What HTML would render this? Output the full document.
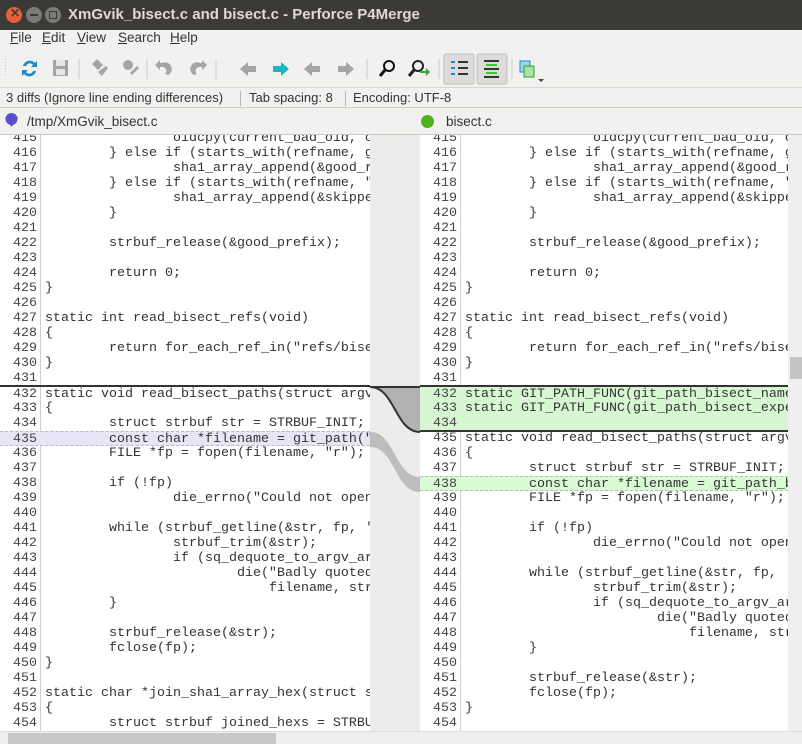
<!DOCTYPE html>
<html><head><meta charset="utf-8"><style>
*{margin:0;padding:0;box-sizing:border-box}
body{width:802px;height:744px;overflow:hidden;background:#f2f1f0;font-family:"Liberation Sans",sans-serif;position:relative}
.title{position:absolute;left:0;top:0;width:802px;height:30px;background:#3b3a36;color:#dfdbd2;font-weight:bold;font-size:15px}
.title .t{position:absolute;left:68px;top:6px}
.btn{position:absolute;top:7px;width:16px;height:16px;border-radius:50%}
.menu{position:absolute;top:30px;left:0;width:802px;height:18px;font-size:13.5px;color:#333}
.menu span{position:absolute;top:0}
.tb{position:absolute;top:48px;left:0;width:802px;height:40px;border-bottom:1px solid #d8d6d3}
.status{position:absolute;top:88px;left:0;width:802px;height:20px;font-size:13px;color:#333;border-bottom:1px solid #cfcdca}
.status span{position:absolute;top:2px}
.sep{position:absolute;top:3px;width:1px;height:15px;background:#b5b3b0}
.hdr{position:absolute;top:109px;height:26px;font-size:13.5px;color:#333;width:802px;border-bottom:1px solid #c9c7c4}
.pane{position:absolute;top:135px;height:596px;background:#fff;overflow:hidden}
.rows{position:absolute;left:0;top:-4px;width:100%}
.r{height:15px;line-height:15px;font-family:"Liberation Mono",monospace;font-size:13.33px;color:#333;white-space:pre;position:relative}
.n{position:absolute;left:0;text-align:right;color:#444}
.c{position:absolute;top:0}
.gut{position:absolute;top:0;height:100%;width:1px;background:#cfcfcf}
</style></head><body>
<div class="title">
<div class="btn" style="left:6px;background:#e8603a;"></div><div style="position:absolute;left:10px;top:6px;color:#3b3a36;font-size:12px">✕</div>
<div class="btn" style="left:26px;background:#7b7a75"></div><div style="position:absolute;left:30px;top:14px;width:8px;height:2px;background:#3b3a36"></div>
<div class="btn" style="left:45px;background:#7b7a75"></div><div style="position:absolute;left:49px;top:11px;width:8px;height:8px;border:1.5px solid #3b3a36"></div>
<div class="t">XmGvik_bisect.c and bisect.c - Perforce P4Merge</div></div>
<div class="menu"><span style="left:10px"><u>F</u>ile</span><span style="left:42px"><u>E</u>dit</span><span style="left:77px"><u>V</u>iew</span><span style="left:118px"><u>S</u>earch</span><span style="left:170px"><u>H</u>elp</span></div>
<div class="tb">
<svg width="802" height="40" style="position:absolute;left:0;top:1px">
<g fill="#bbb"><rect x="5" y="10" width="1" height="1"/><rect x="5" y="13" width="1" height="1"/><rect x="5" y="16" width="1" height="1"/><rect x="5" y="19" width="1" height="1"/><rect x="5" y="22" width="1" height="1"/><rect x="5" y="25" width="1" height="1"/></g>
<path d="M23 17a7 7 0 0 1 12-3l2-2v6h-6l2-2a4 4 0 0 0-7 1z M36 22a7 7 0 0 1-12 3l-2 2v-6h6l-2 2a4 4 0 0 0 7-1z" fill="#1a8fc7"/>
<rect x="53" y="11" width="15" height="16" fill="#a5a4a2"/><rect x="56" y="11" width="9" height="6" fill="#e6e5e3"/><rect x="56" y="20" width="9" height="6" fill="#e6e5e3"/>
<line x1="79" y1="10" x2="79" y2="30" stroke="#ccc"/>
<path d="M92 15l5-5 6 6-5 5z M98 23l8-6 2 2-6 8z" fill="#a5a4a2"/>
<circle cx="128" cy="16" r="5" fill="#a5a4a2"/><path d="M130 24l7-7 2 2-7 7z" fill="#a5a4a2"/>
<line x1="147" y1="10" x2="147" y2="30" stroke="#ccc"/>
<path d="M168 26a6 6 0 0 0-6-12h-2v-3l-5 5 5 5v-3h2a4 4 0 0 1 3 7z" fill="#a5a4a2"/>
<path d="M194 26a6 6 0 0 1 6-12h2v-3l5 5-5 5v-3h-2a4 4 0 0 0-3 7z" fill="#a5a4a2"/>
<line x1="216" y1="10" x2="216" y2="30" stroke="#ccc"/>
<path d="M240 20l8-7v4h8v6h-8v4z" fill="#a5a4a2"/>
<path d="M289 20l-8-7v4h-8v6h8v4z" fill="#1ab6c4"/>
<path d="M304 20l8-7v4h8v6h-8v4z" fill="#a5a4a2"/>
<path d="M354 20l-8-7v4h-8v6h8v4z" fill="#a5a4a2"/>
<line x1="367" y1="10" x2="367" y2="30" stroke="#ccc"/>
<circle cx="389" cy="17" r="5" fill="none" stroke="#111" stroke-width="2"/><path d="M385 21l-5 6" stroke="#111" stroke-width="3"/>
<circle cx="418" cy="17" r="5" fill="none" stroke="#222" stroke-width="2"/><path d="M414 21l-5 6" stroke="#222" stroke-width="3"/><path d="M420 22l6 0l0-3l4 4l-4 4l0-3l-6 0z" fill="#3a3"/>
<line x1="439" y1="10" x2="439" y2="30" stroke="#ccc"/>
<rect x="444" y="5" width="30" height="30" rx="2" fill="#dddcda" stroke="#bfbebc"/>
<rect x="477" y="5" width="30" height="30" rx="2" fill="#dddcda" stroke="#bfbebc"/>
<g fill="#1a8fc7"><rect x="451" y="12" width="4" height="2"/><rect x="451" y="18" width="4" height="2"/><rect x="451" y="24" width="4" height="2"/></g>
<g fill="#333"><rect x="458" y="12" width="10" height="2"/><rect x="458" y="18" width="10" height="2"/><rect x="458" y="24" width="10" height="2"/></g>
<g fill="#333"><rect x="484" y="11" width="15" height="2"/><rect x="484" y="19" width="15" height="2"/><rect x="484" y="27" width="15" height="2"/></g>
<g fill="#3c3"><rect x="486" y="15" width="11" height="2"/><rect x="486" y="23" width="11" height="2"/></g>
<line x1="512" y1="10" x2="512" y2="30" stroke="#ccc"/>
<rect x="520" y="12" width="10" height="11" fill="#9fd3f0" stroke="#1a8fc7"/><rect x="524" y="17" width="10" height="11" fill="#a8e0a8" stroke="#2a2"/>
<path d="M538 30h6l-3 3z" fill="#444"/>
</svg></div>
<div class="status"><span style="left:6px">3 diffs (Ignore line ending differences)</span><div class="sep" style="left:240px"></div><span style="left:249px">Tab spacing: 8</span><div class="sep" style="left:345px"></div><span style="left:353px">Encoding: UTF-8</span></div>
<div class="hdr"><svg width="20" height="20" style="position:absolute;left:3px;top:4px"><path d="M2 4h13l-6.5 10z" fill="#5a4fcf"/><circle cx="8.5" cy="6" r="6" fill="#5a4fcf"/></svg><span style="position:absolute;left:27px;top:5px">/tmp/XmGvik_bisect.c</span>
<div style="position:absolute;left:421px;top:6px;width:13px;height:13px;border-radius:50%;background:#52b11a"></div><span style="position:absolute;left:446px;top:5px">bisect.c</span></div>

<div style="position:absolute;left:370px;top:135px;width:50px;height:596px;background:#edecea"></div>
<svg width="50" height="120" style="position:absolute;left:370px;top:382px">
<path d="M0 5 C25 5 25 50 50 50 L50 5 Z" fill="#b2b2b2"/>
<path d="M0 5 C25 5 25 50 50 50" fill="none" stroke="#333" stroke-width="2"/>
<path d="M0 5H50" stroke="#333" stroke-width="2"/>
<path d="M0 50 C25 50 25 95 50 95 L50 110 C25 110 25 65 0 65 Z" fill="#bdbdbd"/>
</svg>

<div class="pane" style="left:0;width:370px"><div class="gut" style="left:40px"></div><div class="rows" id="L"></div></div>
<div class="pane" style="left:420px;width:368px"><div class="gut" style="left:40px"></div><div class="rows" id="R"></div></div>

<div style="position:absolute;left:788px;top:135px;width:14px;height:596px;background:#efefef"><div style="position:absolute;left:2px;top:222px;width:12px;height:22px;background:#c4c4c4"></div></div>
<div style="position:absolute;left:0;top:731px;width:802px;height:13px;background:#efefef;border-top:1px solid #ddd"><div style="position:absolute;left:8px;top:1px;width:268px;height:11px;background:#c8c8c8"></div></div>
<script>
var L=["                oidcpy(current_bad_oid, oid);","        } else if (starts_with(refname, good_prefix)) {","                sha1_array_append(&good_revs, oid->hash);","        } else if (starts_with(refname, \"skip-\")) {","                sha1_array_append(&skipped_revs, oid->hash);","        }","","        strbuf_release(&good_prefix);","","        return 0;","}","","static int read_bisect_refs(void)","{","        return for_each_ref_in(\"refs/bisect/\", register_ref, NULL);","}","",
"static void read_bisect_paths(struct argv_array *array)","{","        struct strbuf str = STRBUF_INIT;","        const char *filename = git_path(\"BISECT_NAMES\");","        FILE *fp = fopen(filename, \"r\");","","        if (!fp)","                die_errno(\"Could not open file '%s'\", filename);","","        while (strbuf_getline(&str, fp, '\\n') != EOF) {","                strbuf_trim(&str);","                if (sq_dequote_to_argv_array(str.buf, array))","                        die(\"Badly quoted content in file '%s': %s\",","                            filename, str.buf);","        }","","        strbuf_release(&str);","        fclose(fp);","}","","static char *join_sha1_array_hex(struct sha1_array *array, char delim)","{","        struct strbuf joined_hexs = STRBUF_INIT;"];
var R=L.slice(0,17).concat(["static GIT_PATH_FUNC(git_path_bisect_names, \"BISECT_NAMES\")","static GIT_PATH_FUNC(git_path_bisect_expected_rev, \"BISECT_EXPECTED_REV\")",""],L.slice(17,37));
R[23]="        const char *filename = git_path_bisect_names();";
function build(id,arr){var h="";for(var i=0;i<arr.length;i++){var n=415+i,st="";
if(id=="L"&&n==432)st="border-top:2px solid #333;margin-top:-1px;height:16px;";
if(id=="L"&&n==435)st="background:#e6e6f7;border-top:1px dashed #b9b9c9;border-bottom:1px dashed #b9b9c9;";
if(id=="R"&&n>=432&&n<=434)st="background:#d7f7d3;"+(n==432?"border-top:2px solid #333;margin-top:-1px;height:16px;":"")+(n==434?"border-bottom:2px solid #333;height:16px;margin-bottom:-1px;":"");
if(id=="R"&&n==438)st="background:#dafad6;border-top:1px dashed #aac7a6;border-bottom:1px dashed #aac7a6;";
h+='<div class="r" style="'+st+'"><span class="n" style="width:37px">'+n+'</span><span class="c" style="left:45px">'+arr[i].replace(/&/g,"&amp;").replace(/</g,"&lt;")+'</span></div>';}
document.getElementById(id).innerHTML=h;}
build("L",L);build("R",R);
</script>
</body></html>
